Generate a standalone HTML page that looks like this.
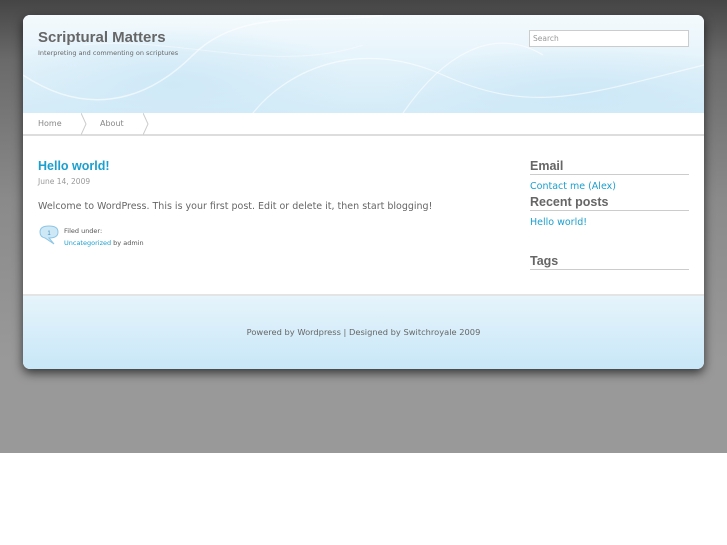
<!DOCTYPE html>
<html><head><style>
*{margin:0;padding:0;box-sizing:border-box}
body{width:727px;height:545px;background:#fff;font-family:"DejaVu Sans",sans-serif;position:relative;overflow:hidden}
#bg{position:absolute;left:0;top:0;width:727px;height:453px;background:linear-gradient(#454545 0px,#6a6a6a 60px,#8a8a8a 200px,#999 360px,#999 453px)}
#wrap{position:absolute;left:23px;top:15px;width:681px;height:354px;border-radius:7px;overflow:hidden;background:#fff;box-shadow:0 4px 10px rgba(0,0,0,.65)}
#hdr{position:absolute;left:0;top:0;width:681px;height:98px;background:radial-gradient(ellipse 180px 60px at 150px 70px,#cfe9f7,transparent),radial-gradient(ellipse 200px 50px at 560px 80px,#cde8f7,transparent),linear-gradient(#f4fafd,#e0f1fa 60%,#d4ecf8)}
h1{position:absolute;left:15px;top:14px;font-size:15px;color:#666;font-weight:bold;font-family:"Liberation Sans",sans-serif}
.tag{position:absolute;left:15px;top:34px;font-size:6.5px;color:#666}
.search{position:absolute;left:506px;top:15px;width:160px;height:17px;border:1px solid #ccc;background:#fff;font-size:7.5px;color:#999;padding:3px 3px}
#nav{position:absolute;left:0;top:98px;width:681px;height:23px;background:#fff;border-bottom:2px solid #ddd;font-size:8px;color:#888}
#nav span{position:absolute;top:6px}
.sep{position:absolute;top:0;width:6px;height:22px}
.title{position:absolute;left:15px;top:144px;font-size:12.5px;font-weight:bold;color:#1a9fcf;font-family:"Liberation Sans",sans-serif}
.date{position:absolute;left:15px;top:162px;font-size:7.5px;color:#999}
.body{position:absolute;left:15px;top:186px;font-size:9.5px;color:#666}
.filed{position:absolute;left:41px;top:210px;font-size:6.5px;color:#555;line-height:12px}
a{color:#1a9fcf;text-decoration:none}
.wh{position:absolute;left:507px;width:159px;font-size:12.5px;font-weight:bold;color:#666;border-bottom:1px solid #ccc;padding-bottom:1px;font-family:"Liberation Sans",sans-serif}
.wl{position:absolute;left:507px;font-size:9.5px;color:#1a9fcf}
#ftr{position:absolute;left:0;top:279px;width:681px;height:75px;border-top:2px solid #e4e4e4;background:linear-gradient(#e6f4fb,#c8e7f8);font-size:8.3px;color:#666;text-align:center;padding-top:31px}
</style></head><body>
<div id="bg"></div>
<div id="wrap">
<div id="hdr">
<svg width="681" height="98" style="position:absolute;left:0;top:0" fill="none" stroke="#fff" stroke-opacity=".6">
<path d="M0 60 C60 100 120 90 170 40 S300 10 360 0" stroke-width="1.5"/>
<path d="M230 98 C260 60 330 20 420 60 S560 80 681 50" stroke-width="1.2"/>
<path d="M380 98 C420 40 470 10 520 40" stroke-width="1.2"/>
<path d="M60 30 C150 20 250 60 340 30" stroke-width="1" stroke-opacity=".4"/>
</svg>
<h1>Scriptural Matters</h1>
<div class="tag">Interpreting and commenting on scriptures</div>
<div class="search">Search</div>
</div>
<div id="nav">
<span style="left:15px">Home</span>
<svg class="sep" style="left:58px" viewBox="0 0 6 22"><path d="M0 0 L5 11 L0 22" fill="none" stroke="#ccc"/></svg>
<span style="left:77px">About</span>
<svg class="sep" style="left:120px" viewBox="0 0 6 22"><path d="M0 0 L5 11 L0 22" fill="none" stroke="#ccc"/></svg>
</div>
<div class="title">Hello world!</div>
<div class="date">June 14, 2009</div>
<div class="body">Welcome to WordPress. This is your first post. Edit or delete it, then start blogging!</div>
<svg style="position:absolute;left:15px;top:210px" width="22" height="20" viewBox="0 0 22 20"><path d="M2 7 Q2 1 11 1 Q20 1 20 7 Q20 13 11 13 L16 19 L7 13 Q2 12 2 7Z" fill="#cfe8f6" stroke="#8cc6e6"/><text x="11" y="10" font-size="6" fill="#3a8fc0" text-anchor="middle" font-family="Liberation Sans">1</text></svg>
<div class="filed">Filed under:<br><a>Uncategorized</a> by admin</div>
<div class="wh" style="top:144px">Email</div>
<div class="wl" style="top:166px">Contact me (Alex)</div>
<div class="wh" style="top:180px">Recent posts</div>
<div class="wl" style="top:202px">Hello world!</div>
<div class="wh" style="top:239px">Tags</div>
<div id="ftr">Powered by Wordpress | Designed by Switchroyale 2009</div>
</div>
</body></html>
